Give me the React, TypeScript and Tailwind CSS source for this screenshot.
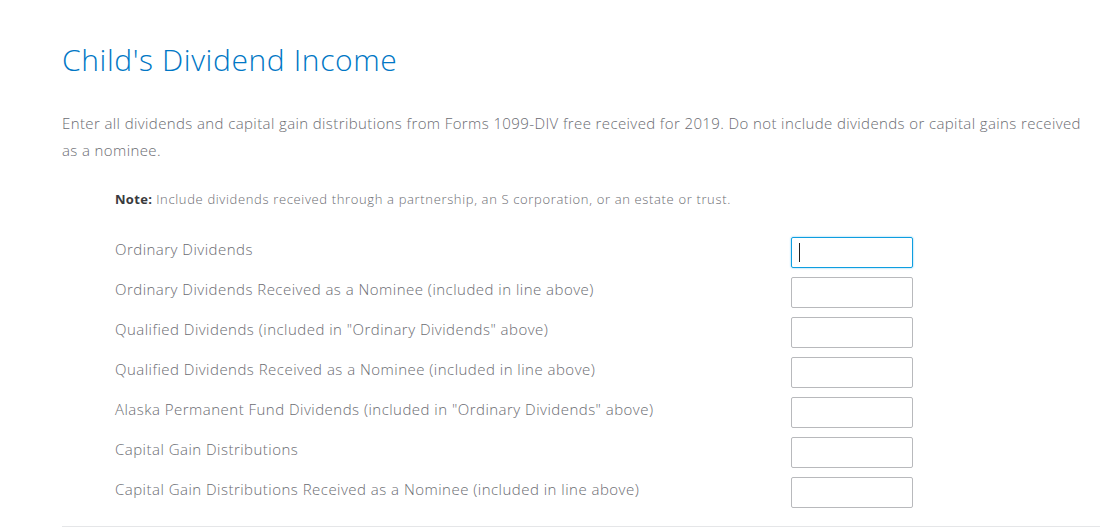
import React from 'react';

const fields = [
  { label: 'Ordinary Dividends', focused: true },
  { label: 'Ordinary Dividends Received as a Nominee (included in line above)' },
  { label: 'Qualified Dividends (included in "Ordinary Dividends" above)' },
  { label: 'Qualified Dividends Received as a Nominee (included in line above)' },
  { label: 'Alaska Permanent Fund Dividends (included in "Ordinary Dividends" above)' },
  { label: 'Capital Gain Distributions' },
  { label: 'Capital Gain Distributions Received as a Nominee (included in line above)' },
];

export default function App() {
  return (
    <div className="min-h-screen bg-white font-['Open_Sans',sans-serif] font-light">
      <div className="pl-[62px] pr-[12px] pt-[40px]">
        {/* Heading */}
        <h1 className="text-[30px] leading-[40px] text-[#0077c5] font-light tracking-[0.6px]">
          Child's Dividend Income
        </h1>

        <p className="mt-[30px] text-[15px] leading-[27px] text-[#6b6c72] tracking-[0.39px]">
          Enter all dividends and capital gain distributions from Forms 1099-DIV free received for 2019. Do not include dividends or capital gains received as a nominee.
        </p>

        {/* Form */}
        <div className="pl-[53px] mt-[25px]">
          <p className="text-[13px] leading-[20px] text-[#6b6c72] tracking-[0.65px]">
            <span className="font-bold text-[#393a3d] tracking-[0.3px]">Note:</span> Include dividends received through a partnership, an S corporation, or an estate or trust.
          </p>

          <div className="mt-[28px] flex flex-col gap-[9px]">
            {fields.map((f, i) => (
              <div key={i} className="flex items-start">
                <div className="w-[676px] pt-[2px] text-[15px] leading-[20px] text-[#6b6c72] tracking-[0.48px]">
                  {f.label}
                </div>
                {f.focused ? (
                  <div className="w-[122px] h-[31px] rounded-[2px] border border-[#0e9ee0] shadow-[0_0_2px_#69c3f0] flex items-center pl-[7px]">
                    <div className="w-px h-[19px] bg-[#222]" />
                  </div>
                ) : (
                  <div className="w-[122px] h-[31px] rounded-[2px] border border-[#b8b9bc]" />
                )}
              </div>
            ))}
          </div>
        </div>

        <div className="mt-[18px] h-px bg-[#e5e6e8]" />
      </div>
    </div>
  );
}
